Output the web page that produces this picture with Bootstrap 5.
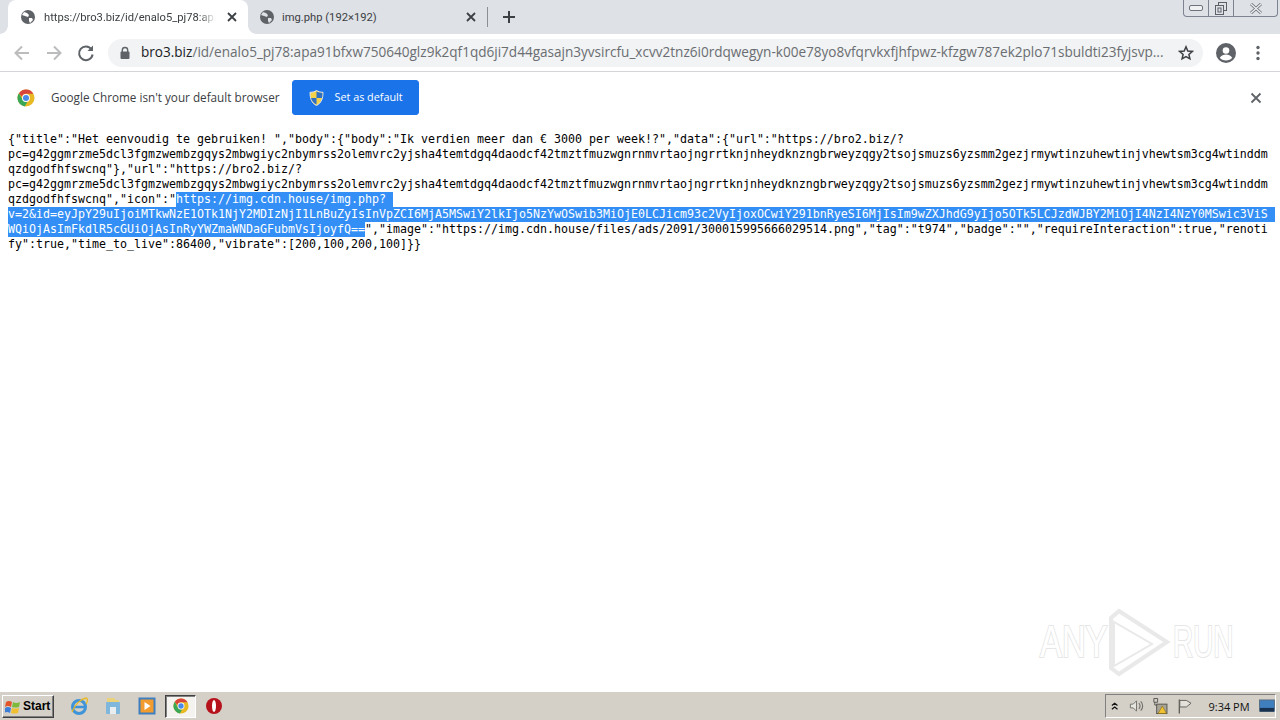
<!DOCTYPE html>
<html lang="en">
<head>
<meta charset="utf-8">
<title>bro3.biz</title>
<link rel="stylesheet" href="https://cdn.jsdelivr.net/npm/bootstrap@5.3.0/dist/css/bootstrap.min.css">
<style>
html,body{height:720px;overflow:hidden;background:#fff}
body{font-family:"Open Sans","Liberation Sans",sans-serif;color:#3c4043}
.shell{height:720px}
.strip{height:34px;background:#dee1e6;padding-left:8px}
.tab-on{width:240px;height:34px;background:#fff;border-radius:8px 8px 0 0;padding:0 0 0 12px;font:11.2px Roboto,sans-serif;color:#3c4043;gap:8px;position:relative}
.tab-on::before,.tab-on::after{content:"";position:absolute;bottom:0;width:8px;height:8px;background:radial-gradient(circle at 0 0,#dee1e6 7.5px,#fff 8px)}
.tab-on::before{left:-8px}
.tab-on::after{right:-8px;background:radial-gradient(circle at 100% 0,#dee1e6 7.5px,#fff 8px)}
.tab-off{width:239px;height:34px;padding:0 0 0 11px;font:11.2px Roboto,sans-serif;gap:7px}
.tab-label{flex:1;white-space:nowrap;min-width:0}
.tab-fade{-webkit-mask-image:linear-gradient(90deg,#000 90%,transparent);mask-image:linear-gradient(90deg,#000 90%,transparent)}
.tab-x{width:16px;height:16px;flex:none;margin-right:8px}
.tab-sep{width:1px;height:20px;background:#8b8e93;margin:0 14px 0 0}
.winbox{height:17px;width:95px;margin:0 2px 0 auto;border:1px solid #7d8491;border-top:0;border-radius:0 0 4px 4px;background:#dee1e6;align-self:flex-start}
.winbox>div{height:16px;border-right:1px solid #7d8491}
.winbox>div:last-child{border-right:0}
.toolbar{height:38px;background:#fff;border-bottom:1px solid #dadce0;padding:0 0 0 12px}
.navico{width:20px;height:20px;flex:none;margin-right:12px}
.omni{width:1095px;height:28px;border-radius:14px;background:#f1f3f4;padding:0 9px 0 11px;font-size:13.57px;color:#6a6d71;white-space:nowrap}
.omni b{font-weight:400;color:#202124}
.urltxt{flex:1;margin-left:10px;min-width:0}
.infobar{height:51px;background:#fff;padding-left:17px;font-size:11.73px;color:#3c4043;box-shadow:0 1px 2px rgba(0,0,0,.45);position:relative}
.setbtn{--bs-btn-bg:#1a73e8;--bs-btn-border-color:#1a73e8;--bs-btn-color:#fff;--bs-btn-hover-bg:#1a73e8;--bs-btn-hover-border-color:#1a73e8;--bs-btn-hover-color:#fff;width:127px;height:35px;font-size:10.8px;border-radius:3px;padding:0 0 0 16px;gap:11px;margin-left:12px;font-family:"Open Sans",sans-serif}
.jsonarea{flex:1;padding:9px 8px 8px;position:relative;overflow:hidden;font-family:"DejaVu Sans Mono","Liberation Mono",monospace;font-size:11.63px;line-height:15px;color:#000;background:#fff}
.jline{height:15px;white-space:pre;width:1268px}
.picked{background:#338ff5;color:#fff;display:inline-block;height:15px;vertical-align:top}
.wmark{position:absolute;left:1035px;top:485px}
.wmark text{font-family:"Liberation Sans",sans-serif;font-size:45px;fill:#fff;stroke:#e6e6e6;stroke-width:2.2;paint-order:stroke}
.taskbar{height:29px;background:#d4d0c8;border-top:1px solid #fff;box-shadow:0 -1px 0 #e0ddd6;padding-left:2px}
.startbtn{width:52px;height:23px;background:#d4d0c8;border:1px solid;border-color:#fff #404040 #404040 #fff;font:700 12px "Liberation Sans",sans-serif;color:#000;gap:2px;padding-left:2px;box-shadow:inset -1px -1px 0 #808080}
.quick{width:20px;height:20px;flex:none}
.chromeon{width:31px;height:23px;background:#f4f3f0;border:1px solid;border-color:#404040 #fff #fff #404040;box-shadow:inset 1px 1px 0 #808080}
.tray{width:171px;height:24px;margin-left:auto;margin-right:4px;border:1px solid;border-color:#808080 #fff #fff #808080;font:11px "Open Sans",sans-serif;color:#111;padding-left:3px}
.clock{width:60px;text-align:center;margin-left:7px}
</style>
</head>
<body>
<div class="shell d-flex flex-column">

  <div class="strip d-flex align-items-center">
    <div class="tab-on d-flex align-items-center">
      <svg width="16" height="16" viewBox="0 0 16 16" class="flex-none"><circle cx="8" cy="8" r="7" fill="#5f6368"/><path d="M4 3l3 1 2 2-1 2-3-1-3-1zM9 9l3 0 1 2-3 3-1-2z" fill="#fff"/></svg>
      <div class="tab-label tab-fade">https://bro3.biz/id/enalo5_pj78:apa</div>
      <svg class="tab-x" viewBox="0 0 16 16"><path d="M4 4l8 8M12 4l-8 8" stroke="#3c4043" stroke-width="1.8"/></svg>
    </div>
    <div class="tab-off d-flex align-items-center">
      <svg width="16" height="16" viewBox="0 0 16 16"><circle cx="8" cy="8" r="7" fill="#5f6368"/><path d="M4 3l3 1 2 2-1 2-3-1-3-1zM9 9l3 0 1 2-3 3-1-2z" fill="#dee1e6"/></svg>
      <div class="tab-label">img.php (192×192)</div>
      <svg class="tab-x" viewBox="0 0 16 16"><path d="M4 4l8 8M12 4l-8 8" stroke="#3c4043" stroke-width="1.8"/></svg>
    </div>
    <div class="tab-sep"></div>
    <svg width="14" height="14" viewBox="0 0 14 14"><path d="M7 1v12M1 7h12" stroke="#3c4043" stroke-width="2"/></svg>
    <div class="winbox d-flex">
      <div class="d-flex align-items-center justify-content-center" style="width:25px"><svg width="14" height="6" viewBox="0 0 14 6"><rect x=".5" y=".5" width="13" height="5" rx="1.5" fill="#f0f1f3" stroke="#6f747c"/></svg></div>
      <div class="d-flex align-items-center justify-content-center" style="width:25px"><svg width="14" height="13" viewBox="0 0 14 13"><rect x="4.5" y=".5" width="8" height="8" fill="none" stroke="#5c6168"/><rect x="1.5" y="3.5" width="8" height="9" fill="#dee1e6" stroke="#5c6168"/><rect x="4" y="6" width="3" height="4" fill="none" stroke="#5c6168"/></svg></div>
      <div class="flex-fill d-flex align-items-center justify-content-center"><svg width="14" height="11" viewBox="0 0 14 11"><path d="M2 1l10 9M12 1L2 10" stroke="#6a6f76" stroke-width="3"/><path d="M2 1l10 9M12 1L2 10" stroke="#eef0f2" stroke-width="1.4"/></svg></div>
    </div>
  </div>

  <div class="toolbar d-flex align-items-center">
    <svg class="navico" viewBox="0 0 20 20"><path d="M17 10H4M10 3.5L3.5 10l6.5 6.5" fill="none" stroke="#babcbe" stroke-width="2"/></svg>
    <svg class="navico" viewBox="0 0 20 20"><path d="M3 10h13M10 3.5l6.5 6.5-6.5 6.5" fill="none" stroke="#babcbe" stroke-width="2"/></svg>
    <svg class="navico" viewBox="0 0 20 20"><path d="M15.5 6.5A6.8 6.8 0 1 0 16.6 11.5" fill="none" stroke="#5f6368" stroke-width="2"/><path d="M17 2.5V8h-5.500z" fill="#5f6368"/></svg>
    <div class="omni d-flex align-items-center">
      <svg width="12" height="14" viewBox="0 0 12 14" class="flex-none"><path d="M3.300 6V4.200a2.700 2.700 0 0 1 5.400 0V6" fill="none" stroke="#5f6368" stroke-width="1.400"/><rect x="1.500" y="5.500" width="9" height="7.500" rx="1" fill="#5f6368"/></svg>
      <div class="urltxt"><b>bro3.biz</b>/id/enalo5_pj78:apa91bfxw750640glz9k2qf1qd6ji7d44gasajn3yvsircfu_xcvv2tnz6i0rdqwegyn-k00e78yo8vfqrvkxfjhfpwz-kfzgw787ek2plo71sbuldti23fyjsvp...</div>
      <svg width="16" height="16" viewBox="0 0 16 16" class="flex-none ms-2"><path d="M8 1.800l1.800 4.200 4.500.4-3.400 3 1 4.400L8 11.500l-3.900 2.300 1-4.400-3.400-3 4.500-.4z" fill="none" stroke="#3c4043" stroke-width="1.500"/></svg>
    </div>
    <svg width="20" height="20" viewBox="0 0 20 20" class="flex-none" style="margin-left:13px"><circle cx="10" cy="10" r="10" fill="#5f6368"/><circle cx="10" cy="7.500" r="3.300" fill="#fff"/><path d="M3.800 14.800c1.500-2.400 4-3.200 6.200-3.200s4.700.8 6.200 3.200C14.800 16.600 12.500 17.500 10 17.500s-4.800-.9-6.200-2.700z" fill="#fff"/></svg>
    <svg width="4" height="16" viewBox="0 0 4 16" class="flex-none" style="margin-left:20px"><circle cx="2" cy="2.500" r="1.700" fill="#5f6368"/><circle cx="2" cy="8" r="1.700" fill="#5f6368"/><circle cx="2" cy="13.500" r="1.700" fill="#5f6368"/></svg>
  </div>

  <div class="infobar d-flex align-items-center">
    <svg width="18" height="18" viewBox="0 0 18 18" class="flex-none"><circle cx="9" cy="9" r="8.500" fill="#e8b923"/><path d="M9 .5a8.500 8.500 0 0 1 7.400 4.300H9a4.200 4.200 0 0 0-4 3L1.900 4.300A8.500 8.500 0 0 1 9 .5z" fill="#d9453a"/><path d="M1.900 4.300L5.700 11a4.200 4.200 0 0 0 4.500 2l-2.400 4.400A8.500 8.500 0 0 1 1.900 4.300z" fill="#3aa757"/><circle cx="9" cy="9" r="3.900" fill="#fff"/><circle cx="9" cy="9" r="3" fill="#4a8ae8"/></svg>
    <span style="margin-left:16px">Google Chrome isn't your default browser</span>
    <button type="button" class="btn setbtn d-flex align-items-center">
      <svg width="15" height="16" viewBox="0 0 15 16" class="flex-none"><path d="M7.500.5c2 1.300 4 1.800 6.500 1.800 0 6-1.500 10.700-6.500 13.200C2.500 13 1 8.300 1 2.300 3.500 2.300 5.500 1.800 7.500.5z" fill="#f3d24a" stroke="#dfe6ef"/><path d="M7.500 1.500v6.500H13c.3-1.700.4-3.600.4-5.100-2.200-.1-4.100-.5-5.900-1.400zM7.500 8v6.500C4.200 12.800 2.700 10.600 2 8z" fill="#2f6fc4"/></svg>
      <span>Set as default</span>
    </button>
    <svg width="12" height="12" viewBox="0 0 12 12" class="flex-none ms-auto" style="margin-right:18px"><path d="M1.500 1.500l9 9M10.500 1.500l-9 9" stroke="#5f6368" stroke-width="1.800"/></svg>
  </div>

  <div class="jsonarea">
    <div class="jline">{"title":"Het eenvoudig te gebruiken! ","body":{"body":"Ik verdien meer dan € 3000 per week!?","data":{"url":"https://bro2.biz/?</div>
    <div class="jline">pc=g42ggmrzme5dcl3fgmzwembzgqys2mbwgiyc2nbymrss2olemvrc2yjsha4temtdgq4daodcf42tmztfmuzwgnrnmvrtaojngrrtknjnheydknzngbrweyzqgy2tsojsmuzs6yzsmm2gezjrmywtinzuhewtinjvhewtsm3cg4wtinddm</div>
    <div class="jline">qzdgodfhfswcnq"},"url":"https://bro2.biz/?</div>
    <div class="jline">pc=g42ggmrzme5dcl3fgmzwembzgqys2mbwgiyc2nbymrss2olemvrc2yjsha4temtdgq4daodcf42tmztfmuzwgnrnmvrtaojngrrtknjnheydknzngbrweyzqgy2tsojsmuzs6yzsmm2gezjrmywtinzuhewtinjvhewtsm3cg4wtinddm</div>
    <div class="jline">qzdgodfhfswcnq","icon":"<span class="picked">https://img.cdn.house/img.php? </span></div>
    <div class="jline"><span class="picked">v=2&amp;id=eyJpY29uIjoiMTkwNzE1OTk1NjY2MDIzNjI1LnBuZyIsInVpZCI6MjA5MSwiY2lkIjo5NzYwOSwib3MiOjE0LCJicm93c2VyIjoxOCwiY291bnRyeSI6MjIsIm9wZXJhdG9yIjo5OTk5LCJzdWJBY2MiOjI4NzI4NzY0MSwic3ViS </span></div>
    <div class="jline"><span class="picked">WQiOjAsImFkdlR5cGUiOjAsInRyYWZmaWNDaGFubmVsIjoyfQ==</span>","image":"https://img.cdn.house/files/ads/2091/300015995666029514.png","tag":"t974","badge":"","requireInteraction":true,"renoti</div>
    <div class="jline">fy":true,"time_to_live":86400,"vibrate":[200,100,200,100]}}</div>
    <svg class="wmark" width="204" height="70" viewBox="0 0 204 70">
      <text transform="translate(5 49) scale(.73 1)">ANY</text>
      <path d="M79 14V58L117 36Z" fill="none" stroke="#e9e9e9" stroke-width="2"/>
      <path d="M84 3L132 34 84 66 76 60V10Z" fill="none" stroke="#e9e9e9" stroke-width="4"/>
      <text transform="translate(138 49) scale(.62 1)">RUN</text>
    </svg>
  </div>

  <div class="taskbar d-flex align-items-center">
    <div class="startbtn d-flex align-items-center">
      <svg width="16" height="15" viewBox="0 0 16 15" class="flex-none"><path d="M1 3q3-2 6 0l-1 5q-3-2-6 0z" fill="#e2552b"/><path d="M8 3q3 2 7 0l-1 5q-4 1-7 0z" fill="#7db93a"/><path d="M0 9q3-2 6 0l-1 5q-3-2-6 0z" fill="#3d7fd8"/><path d="M7 9q3 1 7 0l-1 5q-4 1-7 0z" fill="#f0c030"/></svg>
      <span>Start</span>
    </div>
    <svg class="quick" style="margin-left:15px" viewBox="0 0 20 20"><circle cx="10" cy="11" r="6.500" fill="none" stroke="#3f93d8" stroke-width="3"/><path d="M4 11h12" stroke="#3f93d8" stroke-width="2.500"/><path d="M3 16C6 8 12 3 17 2c2 0 2 3 0 6" fill="none" stroke="#e8b923" stroke-width="1.300"/></svg>
    <svg class="quick" style="margin-left:14px" viewBox="0 0 20 20"><path d="M4 2h7l2 2h3v6H4z" fill="#e9d27a"/><rect x="3" y="6" width="14" height="12" rx="1" fill="#7fb6dc"/><rect x="7" y="11" width="6" height="7" fill="#e8edf0"/></svg>
    <svg class="quick" style="margin-left:14px" viewBox="0 0 20 20"><rect x="2.500" y="2.500" width="15" height="15" fill="#f29b2e" stroke="#3e7fc0" stroke-width="2"/><path d="M7.500 6l6 4-6 4z" fill="#fff"/></svg>
    <div class="chromeon d-flex align-items-center justify-content-center" style="margin-left:8px">
      <svg width="16" height="16" viewBox="0 0 18 18"><circle cx="9" cy="9" r="8.500" fill="#e8b923"/><path d="M9 .5a8.500 8.500 0 0 1 7.400 4.300H9a4.200 4.200 0 0 0-4 3L1.900 4.300A8.500 8.500 0 0 1 9 .5z" fill="#d9453a"/><path d="M1.900 4.300L5.700 11a4.200 4.200 0 0 0 4.500 2l-2.400 4.400A8.500 8.500 0 0 1 1.900 4.300z" fill="#3aa757"/><circle cx="9" cy="9" r="3.900" fill="#fff"/><circle cx="9" cy="9" r="3" fill="#4a8ae8"/></svg>
    </div>
    <svg class="quick" style="margin-left:8px" viewBox="0 0 20 20"><circle cx="10" cy="10" r="8" fill="#b5121b"/><ellipse cx="10" cy="10" rx="2" ry="6" fill="#fff"/></svg>
    <div class="tray d-flex align-items-center">
      <svg width="10" height="10" viewBox="0 0 10 10" class="flex-none" style="margin-left:1px"><path d="M2 4.500L5 2l3 2.500M2 8.500L5 6l3 2.500" fill="none" stroke="#111" stroke-width="1.300"/></svg>
      <svg width="17" height="16" viewBox="0 0 17 16" class="flex-none" style="margin-left:10px"><path d="M1.500 6h3L8 2.500v11L4.500 10h-3z" fill="#e8e6e0" stroke="#6f6f6a"/><path d="M10.500 5a4 4 0 0 1 0 6M12.500 3a7 7 0 0 1 0 10" fill="none" stroke="#6f6f6a" stroke-width="1.200"/></svg>
      <svg width="18" height="18" viewBox="0 0 18 18" class="flex-none" style="margin-left:7px"><path d="M2 1h4v4H2zM3 5v3h12v9H5" fill="none" stroke="#55534c"/><rect x="5" y="7" width="11" height="10" fill="#a9a498" stroke="#55534c"/><path d="M11 9l4.500 8h-9z" fill="#f1c232" stroke="#7a6210" stroke-width=".6"/></svg>
      <svg width="18" height="17" viewBox="0 0 18 17" class="flex-none" style="margin-left:8px"><path d="M2.500 1v15" stroke="#5f5d57" stroke-width="1.400"/><path d="M3 2h7l5 3-5 4H3z" fill="#e3e1da" stroke="#5f5d57"/></svg>
      <div class="clock">9:34 PM</div>
      <svg width="17" height="15" viewBox="0 0 17 15" class="flex-none" style="margin-left:2px"><rect x=".5" y=".5" width="16" height="12" fill="#3f7fbe" stroke="#5a6d80"/><rect x="1" y="9" width="15" height="4" fill="#18314f"/></svg>
    </div>
  </div>
</div>
</body>
</html>
